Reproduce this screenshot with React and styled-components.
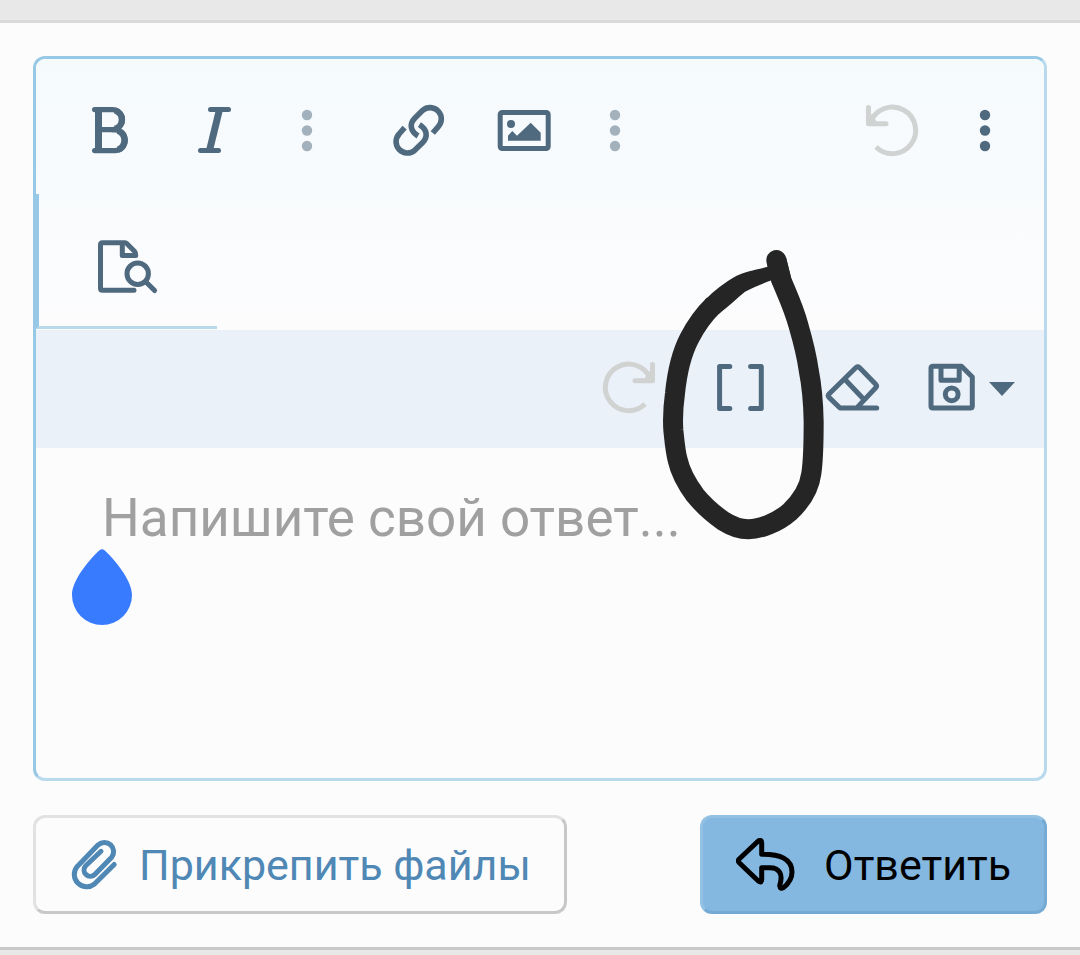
import React from "react";
import styled, { createGlobalStyle } from 'styled-components'


const App = () => {
    const [text, setText] = React.useState('');

    return(
        <Page>
            <GlobalStyle />
            <Card>
                <Editor>
                    <Toolbar>
                        <ToolRow>
                            <Group>
                                <ToolButton aria-label='Жирный'><BoldIcon /></ToolButton>
                                <ToolButton aria-label='Курсив'><ItalicIcon /></ToolButton>
                                <MoreButton aria-label='Ещё' faded><DotsIcon /></MoreButton>
                            </Group>
                            <Group>
                                <ToolButton aria-label='Ссылка'><LinkIcon /></ToolButton>
                                <ToolButton aria-label='Изображение'><ImageIcon /></ToolButton>
                                <MoreButton aria-label='Ещё' faded><DotsIcon /></MoreButton>
                            </Group>
                            <Group end>
                                <ToolButton aria-label='Отменить' disabled><UndoIcon /></ToolButton>
                                <MoreButton aria-label='Ещё'><DotsIcon /></MoreButton>
                            </Group>
                        </ToolRow>
                        <PreviewButton aria-label='Предпросмотр'><PreviewIcon /></PreviewButton>
                    </Toolbar>
                    <ExtraRow>
                        <ToolButton aria-label='Повторить' disabled><RedoIcon /></ToolButton>
                        <ToolButton aria-label='BB-код'><BracketsIcon /></ToolButton>
                        <ToolButton aria-label='Очистить форматирование'><EraserIcon /></ToolButton>
                        <SaveButton aria-label='Черновики'>
                            <SaveIcon />
                            <Caret viewBox='0 0 26 14'><path d='M0 0H26L13 14Z' /></Caret>
                        </SaveButton>
                    </ExtraRow>
                    <Message
                        aria-label='Ответ'
                        placeholder='Напишите свой ответ...'
                        value={text}
                        onChange={e => setText(e.target.value)}
                    />
                    <CursorHandle viewBox='0 0 60 76'>
                        <path d='M27.5 1.3Q30 -1 32.5 1.3C42 10 60 31 60 46A30 30 0 0 1 0 46C0 31 18 10 27.5 1.3Z' />
                    </CursorHandle>
                    <Scribble viewBox='0 0 780 990'>
                        <path fill='#252525' stroke='none' d='M575 108C530 118 500 124 470 137C435 155 400 185 374 210L417 251C445 230 470 205 495 185C520 172 545 162 575 151Z' />
                        <path strokeLinecap='butt' d='M402 224C368 257 345 292 328 325C302 375 291 430 285 490C278 540 278 570 280 600C284 640 286 665 293 690C300 722 318 758 345 795C372 828 400 852 430 873C460 892 485 898 505 898C540 897 590 880 630 845C665 812 688 775 694 730C700 690 701 620 701 575C700 520 694 460 686 420C680 375 668 330 655 285C640 230 620 190 604 150L589 90' />
                        <path d='M604 150L589 90' />
                    </Scribble>
                </Editor>
                <Footer>
                    <AttachButton>
                        <ClipIcon />
                        Прикрепить файлы
                    </AttachButton>
                    <ReplyButton>
                        <ReplyIcon />
                        Ответить
                    </ReplyButton>
                </Footer>
            </Card>
        </Page>
    )
}

export default App

const BoldIcon = () => (
    <Icon viewBox='0 0 64 64'>
        <path strokeWidth='7' strokeLinecap='butt' d='M20.5 10V53' />
        <path strokeWidth='5.2' d='M16.6 10.6H34.5a10 10 0 0 1 0 20H24M35 31H37a10.3 10.3 0 0 1 0 20.6H16.6' />
        <path strokeWidth='6.4' strokeLinecap='butt' d='M37 11.5a9.6 9.6 0 0 1 0 18.4M40 31.8a10.2 10.2 0 0 1 0 19' />
    </Icon>
)

const ItalicIcon = () => (
    <Icon viewBox='0 0 64 64'>
        <path d='M26.5 10.5H44.5M16.5 51.5H34.5' />
        <path strokeWidth='7' strokeLinecap='butt' d='M35.5 10.5L25.5 51.5' />
    </Icon>
)

const DotsIcon = () => (
    <Icon viewBox='0 0 64 64'>
        <g fill='currentColor' stroke='none'>
            <circle cx='32' cy='16' r='5.2' />
            <circle cx='32' cy='31.5' r='5.2' />
            <circle cx='32' cy='47' r='5.2' />
        </g>
    </Icon>
)

const LinkIcon = () => (
    <Icon viewBox='0 0 64 64'>
        <g strokeWidth='5.6' strokeLinecap='butt'>
            <path d='M46.8 34L52.3 27.6A11.3 11.3 0 0 0 36.7 11.3L28.7 19.2C23 25 24.5 32.5 32 37' />
            <path d='M18.6 28.6L13.1 35A11.3 11.3 0 0 0 28.7 51.3L36.7 43.4C42.4 37.6 40.9 30.1 33.4 25.6' />
        </g>
    </Icon>
)

const ImageIcon = () => (
    <Icon viewBox='0 0 64 64'>
        <rect x='8.2' y='13.5' width='48' height='36' rx='2' />
        <g fill='currentColor' stroke='none'>
            <circle cx='19' cy='25' r='4' />
            <path d='M16 41.7V36.7L20.3 32L25 36.7L38.7 23.7L48.7 33.7V41.7Z' />
        </g>
    </Icon>
)

const UndoIcon = () => (
    <Icon viewBox='0 0 64 64'>
        <g transform='translate(-2 0)'>
            <path strokeLinecap='butt' d='M8.6 23A23.3 23.3 0 1 1 14 48' />
            <path d='M6.5 8.5V24.8H24' />
            <path fill='currentColor' stroke='none' d='M6 16L11 15L14.5 23V26H6Z' />
        </g>
    </Icon>
)

const RedoIcon = () => (
    <Icon viewBox='0 0 64 64'>
        <g transform='translate(63 -1) scale(-1 1)'>
            <path strokeLinecap='butt' d='M8.6 23A23.3 23.3 0 1 1 14 48' />
            <path d='M6.5 8.5V24.8H24' />
            <path fill='currentColor' stroke='none' d='M6 16L11 15L14.5 23V26H6Z' />
        </g>
    </Icon>
)

const PreviewIcon = () => (
    <Icon viewBox='0 0 64 64'>
        <path d='M38 56.2H6.5Q4.5 56.2 4.5 54.2V10.8Q4.5 8.8 6.5 8.8H29Q30 8.8 31 9.8L38.7 17.5Q39.7 18.5 39.7 21.5H26.3V10' />
        <circle cx='41.7' cy='39.7' r='10.7' />
        <path d='M50 48L58.6 56.6' />
    </Icon>
)

const BracketsIcon = () => (
    <Icon viewBox='0 0 64 64'>
        <path d='M21.8 9.6H11.6V51.4H21.8M42.6 9.6H53.3V51.4H42.6' />
    </Icon>
)

const EraserIcon = () => (
    <Icon viewBox='0 0 64 64'>
        <path d='M56.7 51H20L9 40.4Q7.4 38.7 9 37L36 10.5Q37.7 9 39.4 10.5L55.7 27.2Q57.4 29 55.7 30.8L37 50.6M25 22.5L43.5 42' />
    </Icon>
)

const SaveIcon = () => (
    <Icon viewBox='0 0 64 64'>
        <path d='M14 9.3H42.5L53.3 20V49Q53.3 51 51.3 51H14Q12 51 12 49V11.3Q12 9.3 14 9.3Z' />
        <path d='M22 10V23.3H40.2V10' />
        <circle cx='32.7' cy='37.3' r='6.4' />
    </Icon>
)

const ClipIcon = () => (
    <FooterIcon viewBox='0 0 52 53' wide={52}>
        <path d='M45.2 26.5L25.2 46.3A12.4 12.4 0 0 1 8 28.7L29.2 6.8A9.2 9.2 0 0 1 42.7 19.2L26 36.3A6.2 6.2 0 0 1 16.7 27.8L32 13.3' />
    </FooterIcon>
)

const ReplyIcon = () => (
    <FooterIcon viewBox='0 0 60 53' wide={60}>
        <path d='M3.2 21L22 3.2Q25.7 1 25.7 5V16.3C44 16 56 21 56 34C56 41 52 46 47.5 49.6Q44 51.5 43.7 47.5C47.5 36 43 29.7 34 29.7H25.7V41.5Q25.7 45.5 22.3 43L3.2 24.7Q1.5 22.8 3.2 21Z' />
    </FooterIcon>
)

const GlobalStyle = createGlobalStyle`
    body{
        margin: 0;
        background: #e8e8e8;
        font-family: Roboto, 'Noto Sans', sans-serif;
    }
    *{
        box-sizing: border-box;
    }
    button{
        margin: 0;
        padding: 0;
        border: none;
        background: none;
        font: inherit;
        cursor: pointer;
    }
`;

const Page = styled.div`
    padding: 20px 0 6px;
`;

const Card = styled.main`
    padding: 33px;
    background: #fcfcfc;
    border-top: 3px solid #dadada;
    border-bottom: 3px solid #c9c9c9;
`;

const Editor = styled.section`
    position: relative;
    border: 3px solid;
    border-color: #97c8e6 #b9d9ec #b9d9ec #97c8e6;
    border-radius: 12px;
`;

const Toolbar = styled.div`
    padding: 13px 0 1px;
    background: linear-gradient(#f5fafd, #fcfcfd);
    border-radius: 9px 9px 0 0;
`;

const ToolRow = styled.div`
    display: flex;
    gap: 22px;
    padding: 0 22px 4px;
`;

const Group = styled.div.withConfig({ shouldForwardProp: prop => prop !== 'end' })`
    display: flex;
    gap: ${props => props.end ? '0' : '2px'};
    ${props => props.end ? 'margin-left: auto;' : ''}
`;

const ToolButton = styled.button`
    display: flex;
    align-items: center;
    justify-content: center;
    width: 104px;
    height: 118px;
    color: #4f697f;
    &:disabled{
        color: #d1d2d2;
    }
`;

const MoreButton = styled(ToolButton).withConfig({ shouldForwardProp: prop => prop !== 'faded' })`
    width: 74px;
    ${props => props.faded ? 'color: #a2b1bc;' : ''}
`;

const SaveButton = styled(ToolButton)`
    && {
        justify-content: flex-start;
        gap: 6px;
        width: 118px;
        padding-left: 15px;
    }
`;

const PreviewButton = styled(ToolButton)`
    && {
        width: 181px;
        height: 135px;
        padding-top: 12px;
        border-left: 3px solid #97c8e6;
        border-bottom: 3px solid #b9d9ec;
    }
`;

const ExtraRow = styled.div`
    display: flex;
    justify-content: flex-end;
    padding-right: 22px;
    background: #eaf1f8;
    > :nth-child(-n+2){
        margin-right: 8px;
    }
`;

const Icon = styled.svg`
    flex: none;
    width: 64px;
    height: 64px;
    fill: none;
    stroke: currentColor;
    stroke-width: 5;
    stroke-linecap: round;
    stroke-linejoin: round;
`;

const FooterIcon = styled(Icon).withConfig({ shouldForwardProp: prop => prop !== 'wide' })`
    width: ${props => props.wide}px;
    height: 53px;
`;

const Caret = styled.svg`
    flex: none;
    width: 26px;
    height: 14px;
    fill: currentColor;
`;

const Message = styled.textarea`
    display: block;
    width: 100%;
    height: 330px;
    padding: 40px 66px;
    border: none;
    outline: none;
    resize: none;
    background: transparent;
    color: #141414;
    font: 400 53px/60px Roboto, 'Noto Sans', sans-serif;
    &::placeholder{
        color: #a0a0a0;
        opacity: 1;
    }
`;

/* sits under the text caret, over the field */
const CursorHandle = styled.svg`
    position: absolute;
    top: 490px;
    left: 36px;
    width: 60px;
    height: 76px;
    fill: #397bff;
`;

const Scribble = styled.svg`
    position: absolute;
    top: 171px;
    right: 204px;
    width: 260px;
    height: 330px;
    fill: none;
    stroke: #252525;
    stroke-width: 60;
    stroke-linecap: round;
    stroke-linejoin: round;
    pointer-events: none;
`;

const Footer = styled.div`
    display: flex;
    justify-content: space-between;
    margin-top: 34px;
`;

const FooterButton = styled.button`
    && {
        display: flex;
        align-items: center;
        height: 99px;
        padding: 0 33px;
        border: 3px solid;
        border-radius: 12px;
        font-size: 43px;
        line-height: 48px;
    }
`;

const AttachButton = styled(FooterButton)`
    && {
        gap: 18px;
        color: #4f87b5;
        border-color: #e2e2e2 #c8c8c8 #c8c8c8 #e2e2e2;
    }
`;

const ReplyButton = styled(FooterButton)`
    && {
        gap: 28px;
        color: #000;
        background: #84b8e0;
        border-color: #93c1e3 #74aad3 #74aad3 #93c1e3;
    }
`;
